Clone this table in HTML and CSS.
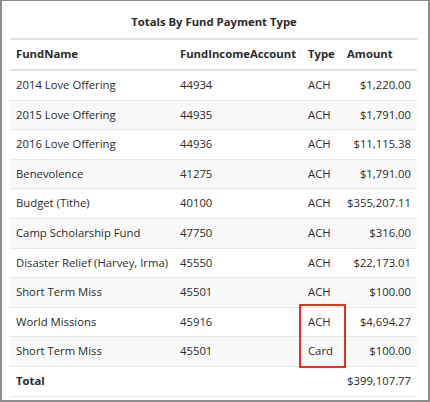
FILE: index.html
```html
<!DOCTYPE html>
<html>
<head>
<meta charset="utf-8">
<link rel="stylesheet" href="styles.css">
</head>
<body>
<div class="frame">
  <div class="title">Totals By Fund Payment Type</div>
  <table class="grid">
    <colgroup>
      <col class="c-name"><col class="c-acct"><col class="c-type"><col class="c-amt">
    </colgroup>
    <thead>
      <tr><th>FundName</th><th>FundIncomeAccount</th><th>Type</th><th class="amt-h">Amount</th></tr>
    </thead>
    <tbody>
      <tr><td>2014 Love Offering</td><td>44934</td><td>ACH</td><td class="num">$1,220.00</td></tr>
      <tr><td>2015 Love Offering</td><td>44935</td><td>ACH</td><td class="num">$1,791.00</td></tr>
      <tr><td>2016 Love Offering</td><td>44936</td><td>ACH</td><td class="num">$11,115.38</td></tr>
      <tr><td>Benevolence</td><td>41275</td><td>ACH</td><td class="num">$1,791.00</td></tr>
      <tr><td>Budget (Tithe)</td><td>40100</td><td>ACH</td><td class="num">$355,207.11</td></tr>
      <tr><td>Camp Scholarship Fund</td><td>47750</td><td>ACH</td><td class="num">$316.00</td></tr>
      <tr><td>Disaster Relief (Harvey, Irma)</td><td>45550</td><td>ACH</td><td class="num">$22,173.01</td></tr>
      <tr><td>Short Term Miss</td><td>45501</td><td>ACH</td><td class="num">$100.00</td></tr>
      <tr><td>World Missions</td><td>45916</td><td class="hl-cell"><span class="hl"></span>ACH</td><td class="num">$4,694.27</td></tr>
      <tr><td>Short Term Miss</td><td>45501</td><td>Card</td><td class="num">$100.00</td></tr>
      <tr class="total"><td>Total</td><td></td><td></td><td class="num">$399,107.77</td></tr>
    </tbody>
  </table>
</div>
</body>
</html>
```
FILE: styles.css
```css
html, body {
  margin: 0;
  padding: 0;
  background: #fff;
}
.frame {
  box-sizing: border-box;
  width: 430px;
  height: 402px;
  border-top: 1px solid #8c8c8c;
  border-left: 2px solid #8c8c8c;
  border-right: 2px solid #8c8c8c;
  border-bottom: 2px solid #8c8c8c;
  padding: 0 10px 0 8px;
  font-family: "Open Sans", sans-serif;
  font-size: 11.3px;
  color: #2b2b2b;
  overflow: hidden;
}
.title {
  box-sizing: border-box;
  height: 39px;
  line-height: 42px;
  text-align: center;
  font-weight: bold;
  border-bottom: 2px solid #e3e3e3;
}
.grid {
  width: 407px;
  border-collapse: collapse;
  table-layout: fixed;
}
.c-name { width: 164px; }
.c-acct { width: 128px; }
.c-type { width: 39px; }
.c-amt { width: 76px; }
.grid th {
  text-align: left;
  font-weight: bold;
  padding: 5px 6px 6px;
  line-height: 18px;
  height: 18px;
  border-bottom: 2px solid #e3e3e3;
  white-space: nowrap;
}
.grid td {
  padding: 5px 6px;
  line-height: 18.6px;
  border-top: 1px solid #e6e6e6;
  white-space: nowrap;
}
.grid thead + tbody tr:first-child td {
  border-top: none;
}
.grid tbody tr:nth-child(even) td {
  background: #f9f9f9;
}
.grid tbody tr.total td {
  background: #fff;
  font-weight: bold;
  border-bottom: 1px solid #e6e6e6;
}
.grid tbody tr.total td.num {
  font-weight: normal;
}
.num {
  text-align: right;
}
.grid th.amt-h {
  text-align: left;
}
.hl-cell {
  position: relative;
}
.hl {
  position: absolute;
  left: -3px;
  top: -4px;
  width: 43px;
  height: 60px;
  border: 2px solid #e8301c;
  z-index: 2;
}
```
